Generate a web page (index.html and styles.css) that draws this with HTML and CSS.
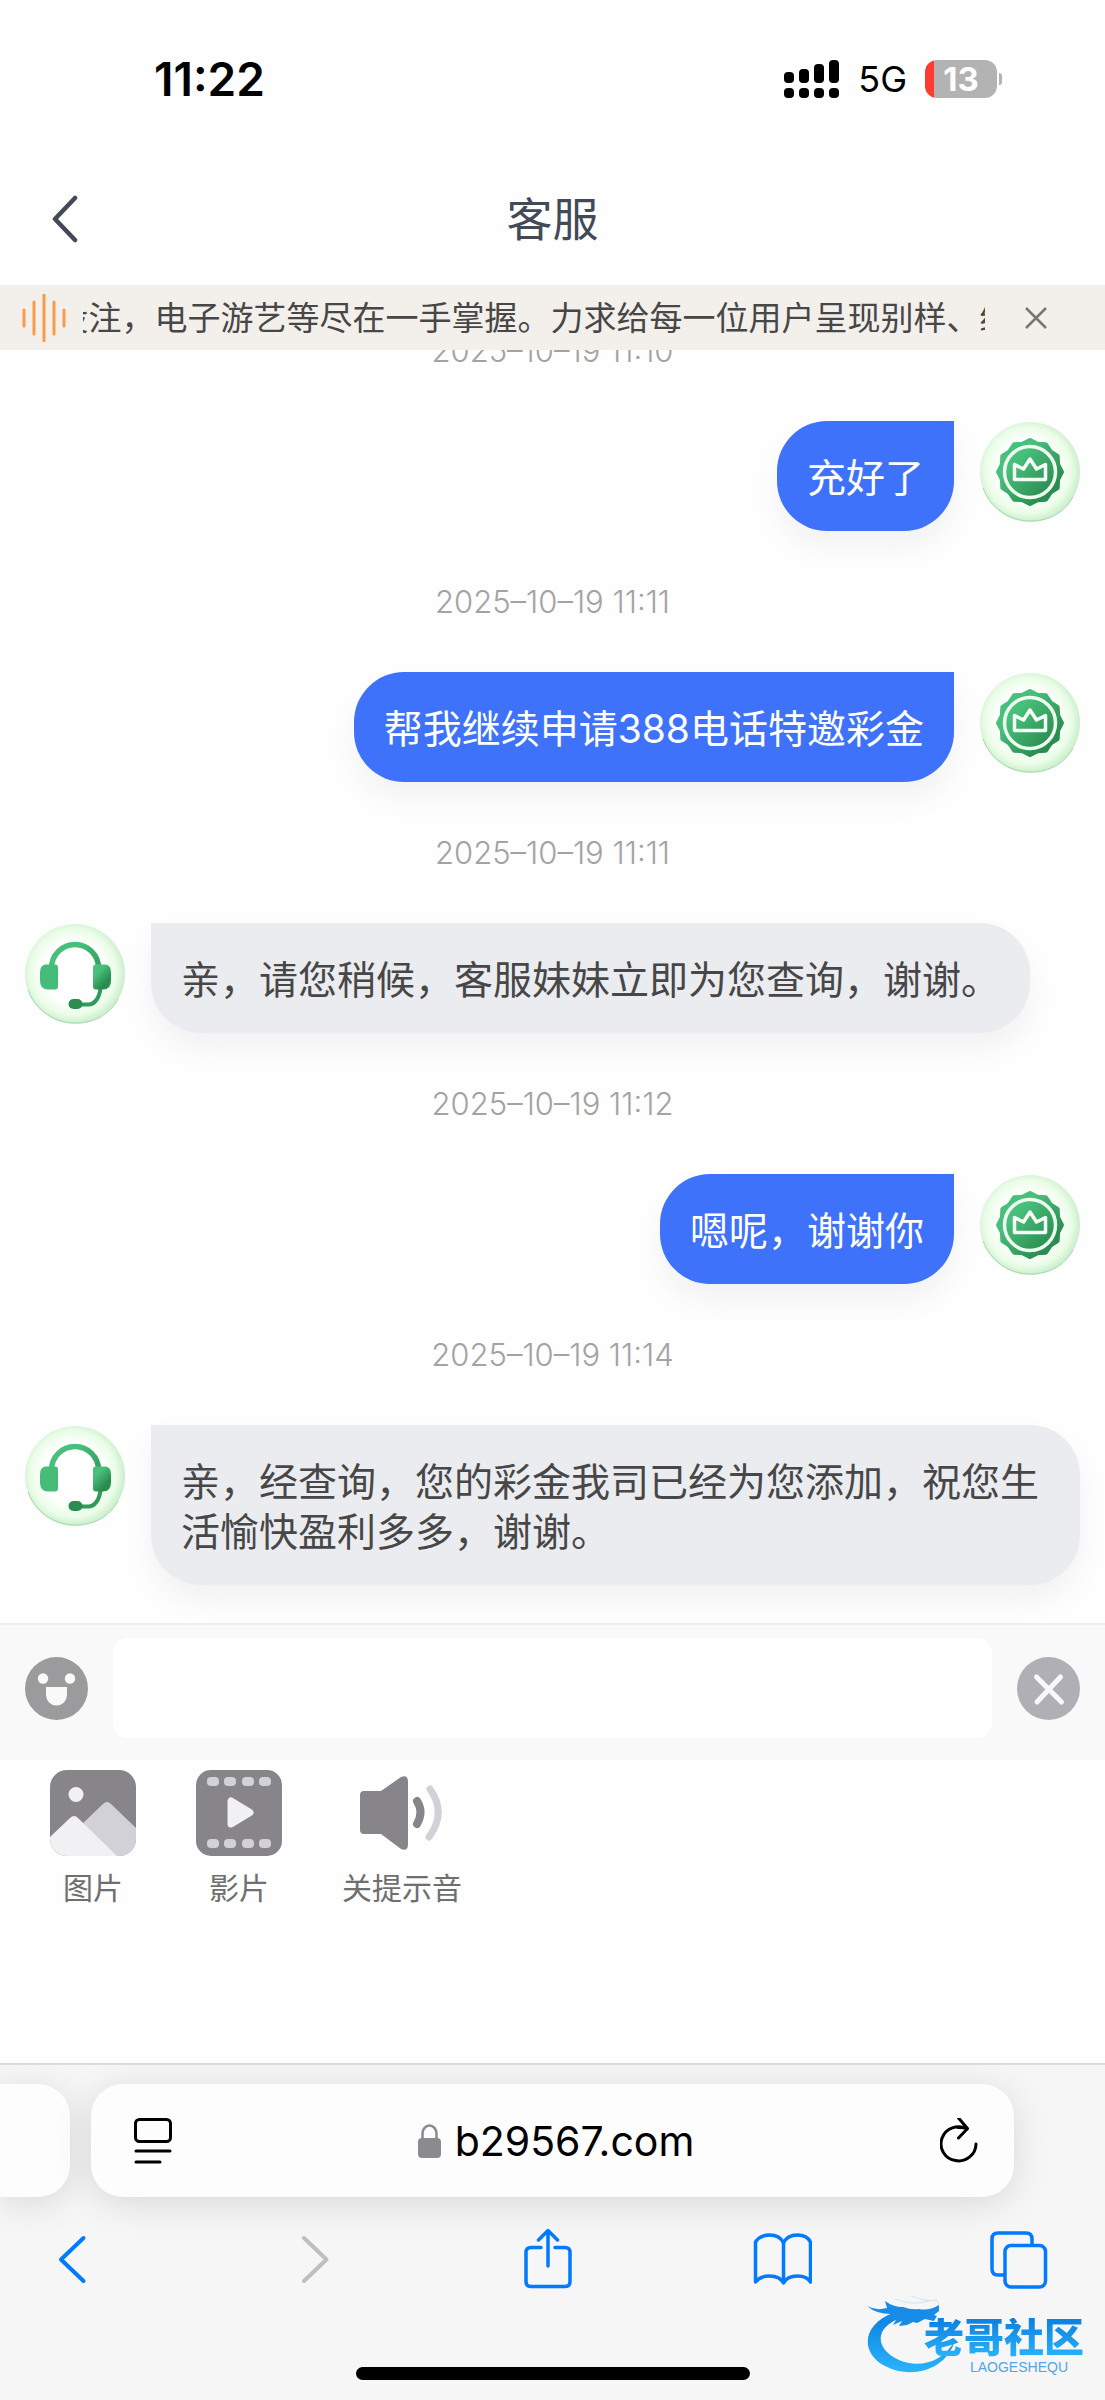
FILE: index.html
```html
<!DOCTYPE html>
<html lang="zh-CN">
<head>
<meta charset="utf-8">
<meta name="viewport" content="width=device-width, initial-scale=1">
<title>客服</title>
<link rel="stylesheet" href="styles.css">
</head>
<body>
<svg class="defs" width="0" height="0" aria-hidden="true">
  <defs>
    <linearGradient id="green" x1="0.2" y1="0.1" x2="0.8" y2="0.9">
      <stop offset="0.2" stop-color="#48c07c"/><stop offset="0.8" stop-color="#2b8c50"/>
    </linearGradient>
    <linearGradient id="green-band" gradientUnits="userSpaceOnUse" x1="20" y1="20" x2="84" y2="84">
      <stop offset="0.25" stop-color="#48c07c"/><stop offset="0.8" stop-color="#2b8c50"/>
    </linearGradient>
    <radialGradient id="glow" cx="0.48" cy="0.48" r="0.54">
      <stop offset="0.55" stop-color="#ffffff"/><stop offset="0.8" stop-color="#eafde7"/><stop offset="1" stop-color="#c4ebc7"/>
    </radialGradient>
    <linearGradient id="ocean" x1="0" y1="0" x2="0" y2="1">
      <stop offset="0" stop-color="#0b7fe0"/><stop offset="1" stop-color="#2ab4fb"/>
    </linearGradient>
    <symbol id="member" viewBox="0 0 100 100">
      <circle cx="50" cy="50" r="50" fill="url(#glow)"/>
      <path d="M3 66a50 50 0 0 0 47 33c20 0 35-9 43-24" fill="none" stroke="#a6dcae" stroke-width="1"/>
      <g transform="translate(3.5 3.5) scale(0.93)">
        <polygon points="50,16 58,20.1 67,20.6 71.9,28.1 79.4,33 79.9,42 84,50 79.9,58 79.4,67 71.9,71.9 67,79.4 58,79.9 50,84 42,79.9 33,79.4 28.1,71.9 20.6,67 20.1,58 16,50 20.1,42 20.6,33 28.1,28.1 33,20.6 42,20.1" fill="url(#green-band)" stroke="url(#green-band)" stroke-width="5" stroke-linejoin="round"/>
      </g>
      <circle cx="50" cy="50" r="25.500" fill="none" stroke="#eefbef" stroke-width="3.500"/>
      <path d="M34.500 42.500v15h31v-15l-9 4.500-6.500-10-6.500 10z" fill="none" stroke="#f6fdf6" stroke-width="3.500" stroke-linejoin="round"/>
    </symbol>
    <symbol id="agent" viewBox="0 0 100 100">
      <circle cx="50" cy="50" r="50" fill="url(#glow)"/>
      <path d="M3 66a50 50 0 0 0 47 33c20 0 35-9 43-24" fill="none" stroke="#a6dcae" stroke-width="1"/>
      <path d="M26.500 44a23.500 23.500 0 0 1 47 0" fill="none" stroke="url(#green-band)" stroke-width="5.500"/>
      <path d="M75.500 64c-1 10-6 16.500-12 16.500h-7" fill="none" stroke="#2f9a5b" stroke-width="4"/>
      <path d="M20 40.500h10q3 0 3 3v19q0 3-3 3h-7q-8 0-8-9v-8q0-7 5-8z" fill="#45bd79"/>
      <path d="M81 40.500h-10q-3 0-3 3v19q0 3 3 3h7q8 0 8-9v-8q0-7-5-8z" fill="url(#green)"/>
      <rect x="43.500" y="75" width="14" height="10" rx="5" fill="#2b8c50"/>
    </symbol>
  </defs>
</svg>

<header class="status">
  <time class="clock">11:22</time>
  <div class="radio">
    <svg width="56" height="38" viewBox="0 0 56 38" aria-hidden="true">
      <rect x="0" y="12" width="10" height="11" rx="4"/><rect x="15" y="9" width="10" height="14" rx="4"/><rect x="30" y="4" width="10" height="19" rx="4"/><rect x="45" y="0" width="10" height="23" rx="4"/>
      <rect x="0" y="28" width="10" height="10" rx="4"/><rect x="15" y="28" width="10" height="10" rx="4"/><rect x="30" y="28" width="10" height="10" rx="4"/><rect x="45" y="28" width="10" height="10" rx="4"/>
    </svg>
    <span class="network">5G</span>
    <span class="battery">13</span>
    <span class="nub"></span>
  </div>
</header>

<nav class="titlebar">
  <button class="icon-btn" aria-label="返回">
    <svg width="30" height="48" viewBox="0 0 30 48"><path d="M25 3L5 24l20 21" fill="none" stroke="#434a57" stroke-width="4.500" stroke-linecap="round" stroke-linejoin="round"/></svg>
  </button>
  <h1 class="title">客服</h1>
</nav>

<div class="notice">
  <svg width="44" height="48" viewBox="0 0 44 48" aria-hidden="true"><path d="M2 16v16M12 8v32M22 1v46M32 8v32M42 16v16" stroke="#fb9a4b" stroke-width="3" stroke-linecap="round"/></svg>
  <p class="ticker"><span>投注，电子游艺等尽在一手掌握。力求给每一位用户呈现别样、绝</span></p>
  <button class="icon-btn" aria-label="关闭公告">
    <svg width="22" height="22" viewBox="0 0 22 22"><path d="M1 1l20 20M21 1L1 21" stroke="#777" stroke-width="2.500"/></svg>
  </button>
</div>

<main class="chat">
  <time class="stamp">2025–10–19 11:10</time>
  <div class="msg mine"><p class="bubble">充好了</p><svg class="avatar"><use href="#member"/></svg></div>
  <time class="stamp">2025–10–19 11:11</time>
  <div class="msg mine"><p class="bubble">帮我继续申请388电话特邀彩金</p><svg class="avatar"><use href="#member"/></svg></div>
  <time class="stamp">2025–10–19 11:11</time>
  <div class="msg"><svg class="avatar"><use href="#agent"/></svg><p class="bubble">亲，请您稍候，客服妹妹立即为您查询，谢谢。</p></div>
  <time class="stamp">2025–10–19 11:12</time>
  <div class="msg mine"><p class="bubble">嗯呢，谢谢你</p><svg class="avatar"><use href="#member"/></svg></div>
  <time class="stamp">2025–10–19 11:14</time>
  <div class="msg"><svg class="avatar"><use href="#agent"/></svg><p class="bubble">亲，经查询，您的彩金我司已经为您添加，祝您生活愉快盈利多多，谢谢。</p></div>
</main>

<form class="composer">
  <button type="button" class="icon-btn" aria-label="表情">
    <svg width="63" height="63" viewBox="0 0 63 63"><circle cx="31.500" cy="31.500" r="31.500" fill="#9b9b9d"/><g fill="#f9f9f9"><circle cx="18" cy="21.500" r="5.200"/><circle cx="45" cy="21.500" r="5.200"/><path d="M21 30h21v8a10.500 10.500 0 0 1-21 0z"/></g></svg>
  </button>
  <input class="entry" type="text" aria-label="消息">
  <button type="button" class="icon-btn" aria-label="收起">
    <svg width="63" height="63" viewBox="0 0 63 63"><circle cx="31.500" cy="31.500" r="31.500" fill="#b0afb6"/><path d="M19.500 20l25 25M43.500 20L20 45" stroke="#f9f9f9" stroke-width="5" stroke-linecap="round"/></svg>
  </button>
</form>

<section class="tools">
  <button class="tool">
    <svg width="86" height="86" viewBox="0 0 86 86">
      <clipPath id="photo"><rect width="86" height="86" rx="17"/></clipPath>
      <g clip-path="url(#photo)"><rect width="86" height="86" fill="#878589"/><path d="M30 56l23-22q4-4 8 0l25 24v28H56z" fill="#d2d1d7"/><path d="M0 67l20-19q4-4 8 0l39 38H0z" fill="#f1f1f4"/><circle cx="26" cy="24.500" r="7.500" fill="#f1f1f4"/></g>
    </svg>
    <span>图片</span>
  </button>
  <button class="tool">
    <svg width="86" height="86" viewBox="0 0 86 86">
      <rect width="86" height="86" rx="15" fill="#878589"/>
      <g fill="#d2d1d7"><rect x="11" y="7" width="12" height="9" rx="4"/><rect x="28" y="7" width="12" height="9" rx="4"/><rect x="46" y="7" width="12" height="9" rx="4"/><rect x="63" y="7" width="12" height="9" rx="4"/><rect x="11" y="69" width="12" height="9" rx="4"/><rect x="28" y="69" width="12" height="9" rx="4"/><rect x="46" y="69" width="12" height="9" rx="4"/><rect x="63" y="69" width="12" height="9" rx="4"/></g>
      <path d="M35 31v23l19-11.500z" fill="#f1f1f4" stroke="#f1f1f4" stroke-width="7" stroke-linejoin="round"/>
    </svg>
    <span>影片</span>
  </button>
  <button class="tool">
    <svg width="86" height="86" viewBox="0 0 86 86">
      <path d="M5 21h17L42 7q7-3 7 5v62q0 8-7 5L22 64H5q-4 0-4-4V25q0-4 4-4z" fill="#878589"/>
      <path d="M58 31q7 11 0 23" fill="none" stroke="#878589" stroke-width="8" stroke-linecap="round"/>
      <path d="M71 19q17 24-1 48" fill="none" stroke="#d2d1d7" stroke-width="7" stroke-linecap="round"/>
    </svg>
    <span>关提示音</span>
  </button>
</section>

<footer class="browser">
  <div class="tabs">
    <div class="card previous"></div>
    <div class="card address">
      <button class="icon-btn" aria-label="页面设置">
        <svg width="38" height="46" viewBox="0 0 38 46"><g fill="none" stroke="#000" stroke-width="3" stroke-linecap="round"><rect x="1.500" y="1.500" width="35" height="22" rx="4"/><path d="M2 33h34M2 44h24"/></g></svg>
      </button>
      <a class="site" href="#">
        <svg width="23" height="34" viewBox="0 0 23 34"><path d="M4.500 16V9.500a7 8 0 0 1 14 0V16" fill="none" stroke="#8a8a8f" stroke-width="2.500"/><rect y="14" width="23" height="20" rx="4" fill="#8a8a8f"/></svg>
        <span>b29567.com</span>
      </a>
      <button class="icon-btn" aria-label="刷新">
        <svg width="38" height="46" viewBox="0 0 38 46"><g fill="none" stroke="#000" stroke-width="3" stroke-linecap="round" stroke-linejoin="round"><path d="M36 26A17.500 17 0 1 1 27 11Q23 9 18 9.500"/><path d="M18.500 0l9 10.500-9 9.500"/></g></svg>
      </button>
    </div>
  </div>
  <nav class="actions">
    <button class="icon-btn" aria-label="后退"><svg viewBox="0 0 60 60"><path d="M41.500 9L19 30.500 41.500 52" stroke-width="4"/></svg></button>
    <button class="icon-btn" aria-label="前进" disabled><svg viewBox="0 0 60 60"><path d="M25 9l22.500 21.500L25 52" stroke-width="4"/></svg></button>
    <button class="icon-btn" aria-label="分享"><svg viewBox="0 0 60 60"><path d="M25 18.500h-10q-5 0-5 5v29q0 5 5 5h34q5 0 5-5v-29q0-5-5-5h-10M32 37V2M22.500 11L32 1.500 41.500 11" stroke-width="3.500"/></svg></button>
    <button class="icon-btn" aria-label="书签"><svg viewBox="0 0 60 60"><path d="M31.500 54V14Q28 6 17.500 6 8 6 3.500 13v40Q8 47 17.500 47 28 47 31.500 54 35 47 45.500 47 55 47 58.500 53V13Q55 6 45.500 6 35 6 31.500 14" stroke-width="3.500"/></svg></button>
    <button class="icon-btn" aria-label="标签页"><svg viewBox="0 0 60 60"><path d="M15 46H9q-6 0-6-6V10q0-6 6-6h28q6 0 6 6v6" stroke-width="3.500"/><rect x="16" y="16.500" width="40.500" height="41.500" rx="6" stroke-width="3.500"/></svg></button>
  </nav>
  <div class="home-indicator"></div>
</footer>

<div class="watermark">
  <svg class="dragon" width="92" height="78" viewBox="0 0 92 78" aria-hidden="true">
    <path d="M26 17C-4 28-8 56 18 70 44 84 80 74 88 44 77 66 52 73 32 64 6 52 8 30 36 21z" fill="url(#ocean)"/>
    <path d="M0 10q9 5 20 2l-2-7q8 6 18 6 8 3 16 2 10 2 20-4l0 6-5 4 3 1-3 5-9-2-8 4-4-1-6 3-8 1 3-5-9 4 3-5-15 1 10-7Q9 18 0 10z" fill="#168be8"/>
    <path d="M28 3q18 7 34 2M44 0q16 6 26 4l2 5" fill="none" stroke="#cfe4f5" stroke-width="1"/>
  </svg>
  <span class="brand">老哥社区</span>
  <span class="brand-latin">LAOGESHEQU</span>
</div>
</body>
</html>
```
FILE: styles.css
```css
* { box-sizing: border-box; }

body {
  margin: 0;
  height: 100vh;
  display: flex;
  flex-direction: column;
  position: relative;
  overflow: hidden;
  background: #fefefe;
  color: #474747;
  font-family: Inter, "Noto Sans CJK SC", sans-serif;
}

p, h1 { margin: 0; font-weight: 400; }
svg { display: block; flex: none; }
.defs { position: absolute; }

button {
  padding: 0;
  border: 0;
  background: none;
  color: inherit;
  font: inherit;
}

.icon-btn { flex: none; display: block; }

/* status bar */
.status {
  flex: none;
  height: 158px;
  padding: 0 103px 0 154px;
  display: flex;
  align-items: center;
  justify-content: space-between;
  color: #000;
}

.clock { font-size: 46px; font-weight: 600; }
.radio { display: flex; align-items: center; }
.network { margin: 0 18px; font-size: 36px; }

.battery {
  width: 72px;
  height: 38px;
  border-radius: 12px;
  background: linear-gradient(90deg, #ff3b30 9px, #b3b3b3 9px);
  color: #fff;
  font-size: 33px;
  font-weight: 700;
  line-height: 38px;
  text-align: center;
}

.nub {
  width: 3px;
  height: 12px;
  margin-left: 2px;
  border-radius: 0 3px 3px 0;
  background: #b3b3b3;
}

/* page title */
.titlebar {
  flex: none;
  height: 127px;
  padding: 0 50px 6px;
  display: grid;
  grid-template-columns: 30px 1fr 30px;
  align-items: center;
}

.title {
  color: #434a57;
  font-size: 46px;
  line-height: 60px;
  text-align: center;
}

/* scrolling notice */
.notice {
  flex: none;
  height: 65px;
  padding: 0 58px 0 22px;
  display: flex;
  align-items: center;
  background: #f3f0eb;
}

.ticker {
  flex: 1;
  min-width: 0;
  margin: 0 40px 0 17px;
  padding-bottom: 3px;
  display: flex;
  justify-content: center;
  overflow: hidden;
  white-space: nowrap;
  font-size: 33px;
}

/* conversation */
.chat {
  flex: 1;
  min-height: 0;
  padding: 0 25px 38px;
  display: flex;
  flex-direction: column;
  justify-content: flex-end;
  overflow: hidden;
}

.stamp {
  flex: none;
  color: #a3a3a3;
  font-size: 31px;
  font-weight: 300;
  line-height: 141px;
  text-align: center;
}

.msg {
  flex: none;
  display: flex;
  align-items: flex-start;
  gap: 26px;
}

.mine { justify-content: flex-end; }

.avatar {
  width: 100px;
  height: 100px;
  margin-top: 1px;
}

.bubble {
  padding: 32px 30px 28px;
  border-radius: 0 50px 50px;
  background: #ebecf0;
  box-shadow: 0 16px 30px rgba(0, 0, 0, 0.05);
  font-size: 39px;
  line-height: 50px;
}

.mine .bubble {
  border-radius: 50px 0 50px 50px;
  background: #3e72fa;
  color: #fff;
}

/* message entry */
.composer {
  flex: none;
  padding: 13px 25px 22px;
  display: flex;
  align-items: center;
  gap: 25px;
  border-top: 2px solid #e9eeee;
  background: #f9f9f9;
}

.entry {
  flex: 1;
  min-width: 0;
  height: 100px;
  padding: 0 30px;
  border: 0;
  border-radius: 15px;
  background: #fff;
  font: inherit;
  font-size: 39px;
}

.tools {
  flex: none;
  min-height: 303px;
  padding: 10px 50px;
  display: flex;
  align-items: flex-start;
  gap: 60px;
}

.tool {
  display: flex;
  flex-direction: column;
  align-items: center;
  gap: 10px;
  color: #6f6f6f;
  font-size: 30px;
  line-height: 44px;
}

/* browser chrome */
.browser {
  flex: none;
  height: 337px;
  border-top: 2px solid #dcdcdd;
  background: #f6f6f6;
  overflow: hidden;
}

.tabs {
  padding: 19px 91px 0 0;
  display: flex;
  gap: 21px;
}

.card {
  height: 113px;
  border-radius: 32px;
  background: #fdfdfd;
  box-shadow: 0 6px 36px rgba(0, 0, 0, 0.12);
}

.previous {
  width: 70px;
  border-radius: 0 32px 32px 0;
}

.address {
  flex: 1;
  padding: 0 36px 0 43px;
  display: flex;
  align-items: center;
  justify-content: space-between;
}

.site {
  display: flex;
  align-items: center;
  gap: 14px;
  color: #000;
  font-size: 41px;
  text-decoration: none;
}

.actions {
  padding: 32px 56px 0 42px;
  display: flex;
  justify-content: space-between;
  color: #007aff;
}

.actions svg {
  width: 60px;
  height: 60px;
  fill: none;
  stroke: currentColor;
  stroke-linecap: round;
  stroke-linejoin: round;
}

.actions :disabled { color: #bfbfbf; }

.home-indicator {
  width: 394px;
  height: 13px;
  margin: 78px auto 0;
  border-radius: 7px;
  background: #000;
}

/* community logo laid over the page corner */
.watermark {
  position: absolute;
  right: 17px;
  bottom: 26px;
  width: 221px;
  height: 78px;
}

.dragon { position: absolute; }

.brand {
  position: absolute;
  top: 22px;
  right: 4px;
  background: linear-gradient(#0b7fe0, #2ab4fb);
  background-clip: text;
  color: transparent;
  font-size: 40px;
  font-weight: 900;
  line-height: 40px;
}

.brand-latin {
  position: absolute;
  right: 20px;
  bottom: 0;
  color: #4fa6e8;
  font-family: "Liberation Sans", sans-serif;
  font-size: 14px;
  line-height: 14px;
}
```
